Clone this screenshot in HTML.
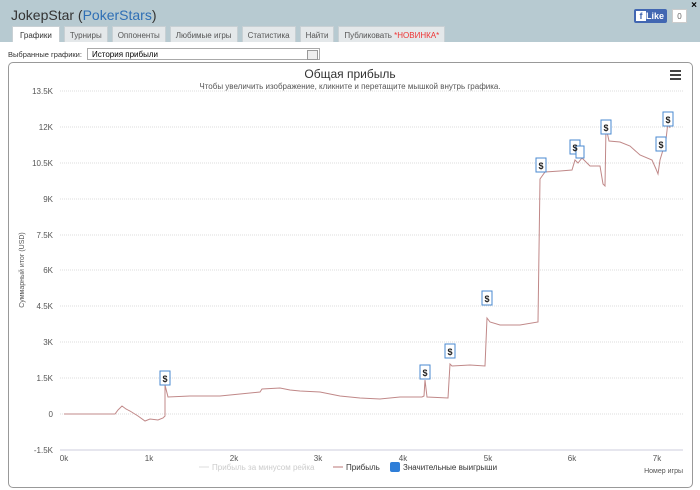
<!DOCTYPE html>
<html><head><meta charset="utf-8"><style>
body{margin:0;width:700px;height:490px;overflow:hidden;background:#b7cad1;font-family:"Liberation Sans","DejaVu Sans",sans-serif;position:relative}
.title{position:absolute;left:11px;top:7px;font-size:14px;color:#333}
.title span{color:#2f6fb5}
.tabs{position:absolute;left:12px;top:26px;display:flex;gap:4px}
.tab{background:#e4e8ea;border:1px solid #c8d0d4;border-bottom:none;font-size:8px;color:#555;padding:4px 5px 3px;height:9px;line-height:9px}
.tab.a{background:#fff;color:#333;padding:4px 7px 3px}
.main{position:absolute;left:0;top:42px;width:700px;height:448px;background:#fff}
.sel{position:absolute;left:8px;top:50px;font-size:7.5px;color:#333}
.box{position:absolute;left:87px;top:48px;height:12px;border:1px solid #aaa;font-size:8px;line-height:12px;padding-left:4px;box-sizing:border-box;width:233px}
.box i{position:absolute;right:1px;top:1px;width:9px;height:8px;border:1px solid #999;background:#eee}
.chart{position:absolute;left:8px;top:62px;width:683px;height:424px;border:1px solid #999;border-radius:5px;background:#fff}
.fb{position:absolute;left:634px;top:9px;width:33px;height:14px;background:#4267b2;border-radius:2px;color:#fff;font-size:9px;font-weight:bold;line-height:14px;text-align:right;padding-right:3px;box-sizing:border-box}
.fb b{position:absolute;left:2px;top:2px;width:10px;height:10px;background:#fff;color:#4267b2;font-size:9px;line-height:11px;text-align:center}
.cnt{position:absolute;left:672px;top:9px;width:15px;height:14px;background:#fff;border:1px solid #ccc;font-size:8px;line-height:13px;text-align:center;color:#666;box-sizing:border-box}
</style></head><body>
<div class="title">JokepStar (<span>PokerStars</span>)</div>
<div style="position:absolute;right:3px;top:0;font-size:10px;font-weight:bold">×</div>
<div class="fb"><b>f</b>Like</div><div class="cnt">0</div>
<div class="tabs"><div class="tab a">Графики</div><div class="tab">Турниры</div><div class="tab">Оппоненты</div><div class="tab">Любимые игры</div><div class="tab">Статистика</div><div class="tab">Найти</div><div class="tab">Публиковать <span style="color:#e33">*НОВИНКА*</span></div></div>
<div class="main"></div>
<div class="sel">Выбранные графики:</div>
<div class="box">История прибыли<i></i></div>
<div class="chart"></div>
<svg width="700" height="490" style="position:absolute;left:0;top:0" font-family="Liberation Sans,DejaVu Sans,sans-serif">
<text x="350" y="78" font-size="12" fill="#333" text-anchor="middle">Общая прибыль</text>
<text x="350" y="89" font-size="8" fill="#555" text-anchor="middle">Чтобы увеличить изображение, кликните и перетащите мышкой внутрь графика.</text>
<g fill="#444"><rect x="670" y="70" width="11" height="2"/><rect x="670" y="74" width="11" height="2"/><rect x="670" y="78" width="11" height="2"/></g>
<g stroke="#ddd" stroke-dasharray="1,1">
<line x1="60" x2="683" y1="91" y2="91"/><line x1="60" x2="683" y1="127" y2="127"/><line x1="60" x2="683" y1="163" y2="163"/><line x1="60" x2="683" y1="199" y2="199"/><line x1="60" x2="683" y1="235" y2="235"/><line x1="60" x2="683" y1="270" y2="270"/><line x1="60" x2="683" y1="306" y2="306"/><line x1="60" x2="683" y1="342" y2="342"/><line x1="60" x2="683" y1="378" y2="378"/><line x1="60" x2="683" y1="414" y2="414"/></g>
<line x1="60" x2="683" y1="450" y2="450" stroke="#ccd"/>
<g font-size="8" fill="#555" text-anchor="end">
<text x="53" y="94">13.5K</text><text x="53" y="130">12K</text><text x="53" y="166">10.5K</text><text x="53" y="202">9K</text><text x="53" y="238">7.5K</text><text x="53" y="273">6K</text><text x="53" y="309">4.5K</text><text x="53" y="345">3K</text><text x="53" y="381">1.5K</text><text x="53" y="417">0</text><text x="53" y="453">-1.5K</text></g>
<g font-size="8" fill="#555" text-anchor="middle">
<text x="64" y="461">0k</text><text x="149" y="461">1k</text><text x="234" y="461">2k</text><text x="318" y="461">3k</text><text x="403" y="461">4k</text><text x="488" y="461">5k</text><text x="572" y="461">6k</text><text x="657" y="461">7k</text></g>
<text x="24" y="270" font-size="7" fill="#555" transform="rotate(-90 24 270)" text-anchor="middle">Суммарный итог (USD)</text>
<text x="683" y="473" font-size="7" fill="#555" text-anchor="end">Номер игры</text>
<g font-size="8"><line x1="199" x2="209" y1="467" y2="467" stroke="#ddd"/><text x="212" y="470" fill="#ccc">Прибыль за минусом рейка</text>
<line x1="333" x2="343" y1="467" y2="467" stroke="#b77"/><text x="346" y="470" fill="#333">Прибыль</text>
<rect x="390" y="462" width="10" height="10" rx="2" fill="#2f7ed8"/><text x="403" y="470" fill="#333">Значительные выигрыши</text></g>
<polyline fill="none" stroke="#c08888" stroke-width="1" points="64,414 90,414 115,414 118,410 122,406 126,409 130,411 138,416 145,421 150,419 158,420 163,418 165,416 165,385 168,397 190,396 220,396 240,394 260,392 262,389 280,388 290,390 300,391 320,392 340,396 360,398 380,399 400,397 422,397 424,396 425,380 427,397 448,398 450,364 452,366 470,365 485,366 487,318 490,322 500,325 520,325 538,322 540,179 545,172 560,171 572,170 575,160 578,163 582,158 590,166 600,166 603,184 605,186 606,127 609,141 620,142 630,146 640,155 652,160 656,169 658,174 660,160 663,150 665,148 668,122 670,128"/>
<g font-size="9" font-weight="bold" text-anchor="middle" fill="#222">
<g stroke="#4a8ad0" fill="#fff"><rect x="160" y="371" width="10" height="14"/><rect x="420" y="365" width="10" height="14"/><rect x="445" y="344" width="10" height="14"/><rect x="482" y="291" width="10" height="14"/><rect x="536" y="158" width="10" height="14"/><rect x="570" y="140" width="10" height="14"/><rect x="576" y="146" width="8" height="12"/><rect x="601" y="120" width="10" height="14"/><rect x="656" y="137" width="10" height="14"/><rect x="663" y="112" width="10" height="14"/></g>
<text x="165" y="382">$</text><text x="425" y="376">$</text><text x="450" y="355">$</text><text x="487" y="302">$</text><text x="541" y="169">$</text><text x="575" y="151">$</text><text x="606" y="131">$</text><text x="661" y="148">$</text><text x="668" y="123">$</text></g>
</svg>
</body></html>
